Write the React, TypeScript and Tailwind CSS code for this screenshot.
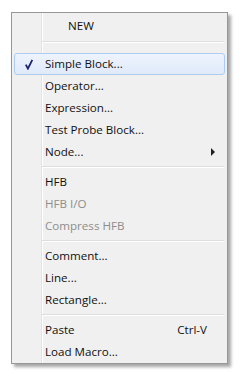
import React from "react";

type Item =
  | { kind: "item"; label: string; checked?: boolean; disabled?: boolean; shortcut?: string; submenu?: boolean; active?: boolean }
  | { kind: "sep" };

const items: Item[] = [
  { kind: "item", label: "Simple Block...", checked: true, active: true },
  { kind: "item", label: "Operator..." },
  { kind: "item", label: "Expression..." },
  { kind: "item", label: "Test Probe Block..." },
  { kind: "item", label: "Node...", submenu: true },
  { kind: "sep" },
  { kind: "item", label: "HFB" },
  { kind: "item", label: "HFB I/O", disabled: true },
  { kind: "item", label: "Compress HFB", disabled: true },
  { kind: "sep" },
  { kind: "item", label: "Comment..." },
  { kind: "item", label: "Line..." },
  { kind: "item", label: "Rectangle..." },
  { kind: "sep" },
  { kind: "item", label: "Paste", shortcut: "Ctrl-V" },
  { kind: "item", label: "Load Macro..." },
];

function Check() {
  return (
    <svg width="8" height="11" viewBox="0 0 8 11" className="block">
      <path d="M0.8 5.6 L2.9 9.6 L7.3 0.8" fill="none" stroke="#1b2473" strokeWidth="1.8" />
    </svg>
  );
}

function Separator() {
  return (
    <div className="flex h-[8px] items-center">
      <div className="ml-[30px] mr-[3px] flex-1">
        <div className="h-px bg-[#dedede]" />
        <div className="h-px bg-white" />
      </div>
    </div>
  );
}

function Row({ item }: { item: Extract<Item, { kind: "item" }> }) {
  return (
    <div
      className={`relative mx-[2px] flex h-[22px] items-center rounded-[3px] border ${
        item.active
          ? "border-[#aeccf1] bg-gradient-to-b from-[#eef4fd] to-[#dfeaf9]"
          : "border-transparent"
      }`}
    >
      <div className="flex w-[26px] justify-center pl-[2px]">{item.checked && <Check />}</div>
      <div className={`ml-[4px] flex-1 ${item.disabled ? "text-[#8d8d8d]" : "text-[#111]"}`}>
        {item.label}
      </div>
      {item.shortcut && <div className="mr-[17px] text-[#111]">{item.shortcut}</div>}
      {item.submenu && (
        <div className="mr-[9px] h-0 w-0 border-y-[4px] border-l-[4px] border-y-transparent border-l-[#222]" />
      )}
    </div>
  );
}

export default function App() {
  return (
    <div className="h-[381px] w-[244px] bg-white pl-[11px] pt-[12px]">
      <div
        className="relative w-[217px] border border-[#979797] bg-[#f0f0f0] pt-[2px] shadow-[3px_3px_3px_rgba(0,0,0,0.35)]"
        style={{ fontFamily: "'Open Sans', 'Noto Sans', sans-serif", fontSize: "11.6px" }}
      >
        <div className="absolute bottom-0 left-[29px] top-0 w-[2px] border-l border-[#e2e3e3] bg-white" />
        <div className="relative">
          <div className="flex h-[22px] items-center pl-[56px] text-[#111]">NEW</div>
          <div className="flex h-[16px] items-start pt-[4px]">
            <div className="ml-[30px] mr-[3px] flex-1">
              <div className="h-px bg-[#dedede]" />
              <div className="h-px bg-white" />
            </div>
          </div>
          {items.map((it, i) => (it.kind === "sep" ? <Separator key={i} /> : <Row key={i} item={it} />))}
        </div>
      </div>
    </div>
  );
}
